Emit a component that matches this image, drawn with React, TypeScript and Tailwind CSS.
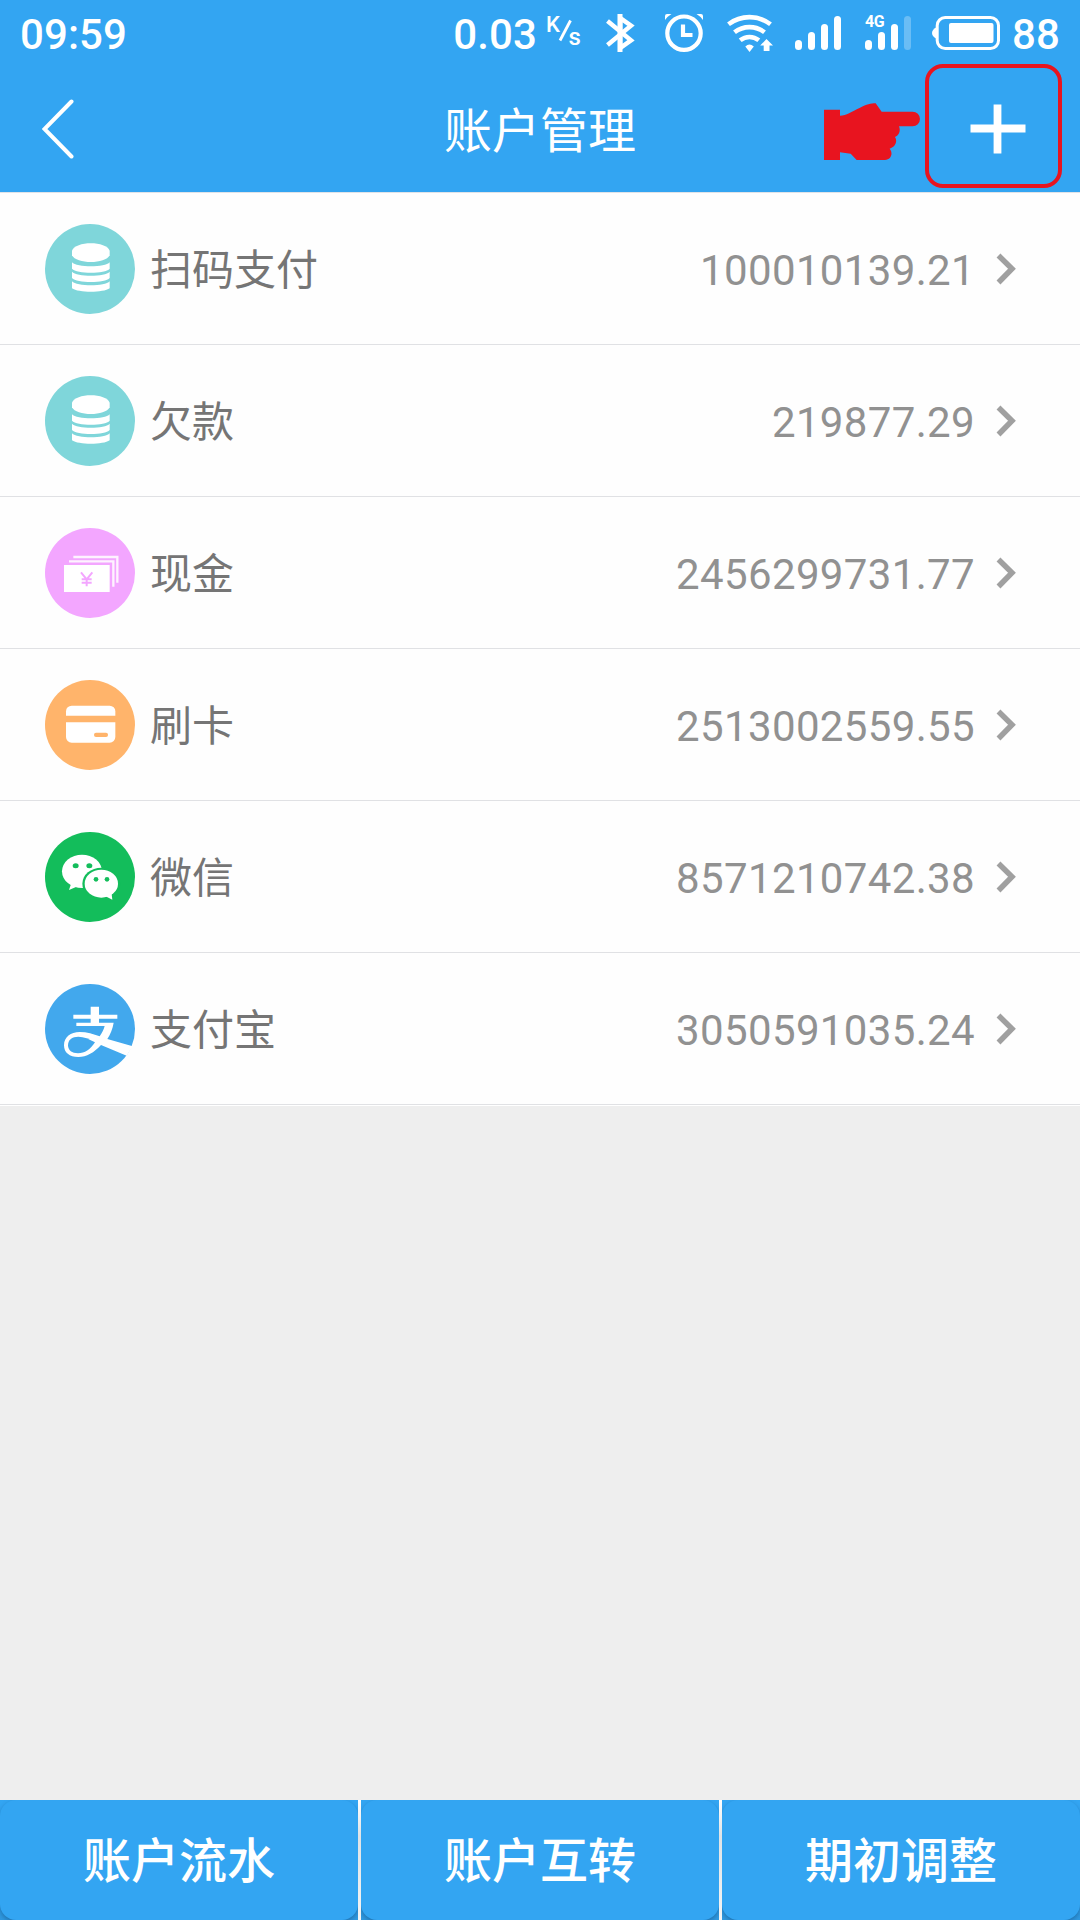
import React from "react";

type IconProps = { className?: string };

const CoinsIcon = () => (
  <svg viewBox="0 0 270 270" className="size-[90px]">
    <circle cx="135" cy="135" r="135" fill="#7fd6da" />
    <g fill="#fff">
      <path d="M81 80C90 50 185 50 194 80V94C182 121 93 121 81 94Z" />
      <path d="M81 115C95 131 181 131 194 115V134C181 150 95 150 81 134Z" />
      <path d="M81 143C95 159 181 159 194 143V162C181 178 95 178 81 162Z" />
      <path d="M81 172C95 188 181 188 194 172V193C175 207 100 207 81 193Z" />
    </g>
  </svg>
);

const CashIcon = () => (
  <svg viewBox="0 0 270 270" className="size-[90px]">
    <circle cx="135" cy="135" r="135" fill="#f3a6ff" />
    <rect x="57" y="111" width="137" height="81" fill="#fff" />
    <path d="M72 100H205V176M85 87H217V164" fill="none" stroke="#fff" strokeWidth="7" opacity="0.85" />
    <path d="M108 133L125 154L142 133M125 152V175M110 154H140M110 164H140" fill="none" stroke="#f3a6ff" strokeWidth="6" />
  </svg>
);

const CardIcon = () => (
  <svg viewBox="0 0 270 270" className="size-[90px]">
    <circle cx="135" cy="135" r="135" fill="#ffb46b" />
    <rect x="63" y="77" width="148" height="111" rx="17" fill="#fff" />
    <path d="M60 117H214" stroke="#ffb46b" strokeWidth="19" />
    <rect x="147" y="158" width="42" height="13" rx="6" fill="#ffb46b" />
  </svg>
);

const WechatIcon = () => (
  <svg viewBox="0 0 270 270" className="size-[90px]">
    <circle cx="135" cy="135" r="135" fill="#13bd5b" />
    <path d="M80 150L72 174L100 162Z" fill="#fff" />
    <ellipse cx="111" cy="118" rx="60" ry="50" fill="#fff" />
    <ellipse cx="169" cy="155" rx="57" ry="48" fill="#13bd5b" />
    <ellipse cx="169" cy="155" rx="50" ry="42" fill="#fff" />
    <path d="M180 192L202 203L199 180Z" fill="#fff" />
    <g fill="#13bd5b">
      <ellipse cx="92" cy="101" rx="9" ry="7.5" />
      <ellipse cx="133" cy="101" rx="9" ry="7.5" />
      <circle cx="153" cy="142" r="7" />
      <circle cx="186" cy="142" r="7" />
    </g>
  </svg>
);

const AlipayIcon = () => (
  <svg viewBox="0 0 270 270" className="size-[90px]">
    <circle cx="135" cy="135" r="135" fill="#42a8ed" />
    <path d="M137 68H162V92H217V104H162V116H206C203 135 196 151 187 165L263 187L245 215L168 183C147 206 125 219 100 219C73 219 57 206 57 184C57 159 77 144 104 144C126 144 145 150 164 157C171 147 176 137 179 126H94V116H137V104H85V92H137Z" fill="#fff" />
    <path d="M150 175C133 165 117 158 100 158C81 158 69 168 69 184C69 199 81 208 99 208C119 208 136 197 150 175Z" fill="#42a8ed" />
  </svg>
);

const ChevronRight = () => (
  <svg viewBox="0 0 20 32" className="ml-[21px] h-8 w-5">
    <path d="M2.5 2.5L16 15.8L2.5 29.5" fill="none" stroke="#a0a0a0" strokeWidth="5.5" />
  </svg>
);

const BluetoothIcon = ({ className }: IconProps) => (
  <svg viewBox="0 0 30 38" className={className}>
    <path d="M1.5 7L25 26.3L14.2 34V4L25 11.7L1.5 31" fill="none" stroke="#fff" strokeWidth="4.5" />
    <path d="M14 0V38" stroke="#fff" strokeWidth="5" />
  </svg>
);

const AlarmIcon = ({ className }: IconProps) => (
  <svg viewBox="0 0 40 38" className={className}>
    <g fill="none" stroke="#fff" strokeWidth="4.2">
      <circle cx="20" cy="19.2" r="16.7" />
      <path d="M19 10.500V21H28.500" />
    </g>
    <path d="M1 6V2Q1 0 3 0H7.500Q4 2 1 6ZM39 6V2Q39 0 37 0H32.500Q36 2 39 6Z" fill="#fff" />
  </svg>
);

const WifiIcon = ({ className }: IconProps) => (
  <svg viewBox="0 0 48 38" className={className}>
    <g fill="none" stroke="#fff" strokeWidth="4.6">
      <path d="M1.500 10.300A34.500 34.500 0 0 1 43.500 10.300" />
      <path d="M7.500 18.300A24.500 24.500 0 0 1 37.500 18.300" />
      <path d="M13.200 26.300A14.800 14.800 0 0 1 31.800 26.300" />
    </g>
    <path d="M18.300 32.500Q22.500 28.500 26.800 32.500L22.500 38Z" fill="#fff" />
    <path d="M39.500 25L46 31.500H42.500V37H36.700V31.500H33.200Z" fill="#fff" />
  </svg>
);

const SignalIcon = ({ className, weak = false }: IconProps & { weak?: boolean }) => (
  <svg viewBox="0 0 46 34" className={className} fill="#fff">
    <rect x="0" y="24" width="7" height="10" rx="3.500" />
    <rect x="13" y="16" width="7" height="18" rx="3.500" />
    <rect x="26" y="8" width="7" height="26" rx="3.500" />
    <rect x="39" y="0" width="7" height="34" rx="3.500" opacity={weak ? 0.27 : 1} />
  </svg>
);

const BatteryIcon = ({ className }: IconProps) => (
  <svg viewBox="0 0 68 34" className={className}>
    <path d="M5 11Q0 13.500 0 17Q0 20.500 5 23Z" fill="#fff" />
    <rect x="5.200" y="1.500" width="61.300" height="31" rx="8" fill="none" stroke="#fff" strokeWidth="3" />
    <rect x="17" y="7" width="44.500" height="20" rx="2" fill="#fff" />
  </svg>
);

const accounts = [
  { name: "扫码支付", amount: "100010139.21", Icon: CoinsIcon },
  { name: "欠款", amount: "219877.29", Icon: CoinsIcon },
  { name: "现金", amount: "2456299731.77", Icon: CashIcon },
  { name: "刷卡", amount: "2513002559.55", Icon: CardIcon },
  { name: "微信", amount: "8571210742.38", Icon: WechatIcon },
  { name: "支付宝", amount: "3050591035.24", Icon: AlipayIcon },
];

const actions = ["账户流水", "账户互转", "期初调整"];

function StatusBar() {
  return (
    <div className="flex h-16 items-center pr-[20px] pl-5 text-[42px] leading-none font-medium text-white">
      <span className="mt-[5px] tracking-[0.1px]">09:59</span>
      <div className="ml-auto flex items-center">
        <span className="mt-[5px] tracking-[0.1px]">0.03</span>
        <div className="relative ml-[9px] h-9 w-[38px] text-[22px]">
          <span className="absolute top-0 left-0">K</span>
          <svg viewBox="0 0 38 36" className="absolute inset-0">
            <path d="M24.500 6.500L14 26.500" stroke="#fff" strokeWidth="2.800" />
          </svg>
          <span className="absolute top-[11px] left-[22.5px] text-[24px]">s</span>
        </div>
        <BluetoothIcon className="mt-[2px] ml-[22px] h-[38px] w-[30px]" />
        <AlarmIcon className="mt-[2px] ml-[27.500px] h-[38px] w-10" />
        <WifiIcon className="mt-[2px] ml-[23px] h-[38px] w-12" />
        <SignalIcon className="mt-[2px] ml-[20.500px] h-[34px] w-[46px]" />
        <div className="relative mt-[2px] ml-6">
          <SignalIcon weak className="h-[34px] w-[46px]" />
          <span className="absolute -top-[2px] left-0 text-[16px] leading-none font-bold tracking-[-0.5px]">4G</span>
        </div>
        <BatteryIcon className="mt-[2px] ml-[21px] h-[34px] w-[68px]" />
        <span className="mt-[5px] ml-[12px] tracking-[0.1px]">88</span>
      </div>
    </div>
  );
}

function NavBar() {
  return (
    <div className="relative flex h-32 items-start justify-between text-white">
      <svg viewBox="0 0 32 60" className="mt-[34.5px] ml-[42px] h-[60px] w-8">
        <path d="M29.500 2.500L2.500 30L29.500 57.500" fill="none" stroke="#fff" strokeWidth="4" strokeLinecap="round" />
      </svg>
      <h1 className="absolute inset-x-0 top-0 text-center text-[48px] leading-[136px] font-normal">账户管理</h1>
      <div className="flex items-start pr-[18px]">
        <svg viewBox="222 308 288 172" className="mt-[39px] mr-[5px] h-[57.300px] w-24">
          <path
            d="M222 328H270V346C290 346 303 334 330 322C350 312 362 309 377 309L395 334H488A22 22 0 0 1 488 378H447C452 390 449 404 435 410C443 422 437 440 419 445C430 458 424 478 405 479H320L302 460L270 456V480H222Z"
            fill="#e8141f"
          />
        </svg>
        <button className="flex h-[124px] w-[137px] items-center justify-center rounded-[18px] border-4 border-[#e8141f]">
          <svg viewBox="0 0 56 50" className="mt-[6px] ml-[8px] h-[50px] w-14">
            <path d="M27.500 0.500V49.500M0.500 24.500H55.500" stroke="#fff" strokeWidth="7.800" />
          </svg>
        </button>
      </div>
    </div>
  );
}

export default function App() {
  return (
    <div className="flex h-[1920px] w-[1080px] flex-col overflow-hidden bg-[#eeeeee] font-[Roboto,'Noto_Sans_CJK_SC',sans-serif]">
      <header className="h-48 shrink-0 bg-[#33a5f2]">
        <StatusBar />
        <NavBar />
      </header>

      <ul className="border-y border-t-[#e0e3e8] border-b-white bg-[#fefefe]">
        {accounts.map(({ name, amount, Icon }) => (
          <li key={name} className="flex h-38 items-center border-b border-[#e0e1e4] pr-16 pl-[45px]">
            <Icon />
            <span className="mt-[5px] ml-[15px] text-[42px] leading-[62px] text-[#757575]">{name}</span>
            <span className="mt-[5px] ml-auto text-[42px] leading-[50px] tracking-[0.35px] text-[#919191]">{amount}</span>
            <ChevronRight />
          </li>
        ))}
      </ul>

      <footer className="mt-auto grid h-[120px] grid-cols-3 gap-[3px] bg-linear-to-b from-white via-[#dfe3e6] via-30% to-[#f4f4f4]">
        {actions.map((label) => (
          <div key={label} className="overflow-hidden bg-linear-to-b from-[#33a5f2] from-5% to-[#2f98df]">
            <button className="h-full w-full rounded-[16px] bg-[#33a5f2] pt-[4px] text-[48px] font-medium text-white shadow-[0_2px_4px_rgba(10,50,90,0.35)]">
              {label}
            </button>
          </div>
        ))}
      </footer>
    </div>
  );
}
